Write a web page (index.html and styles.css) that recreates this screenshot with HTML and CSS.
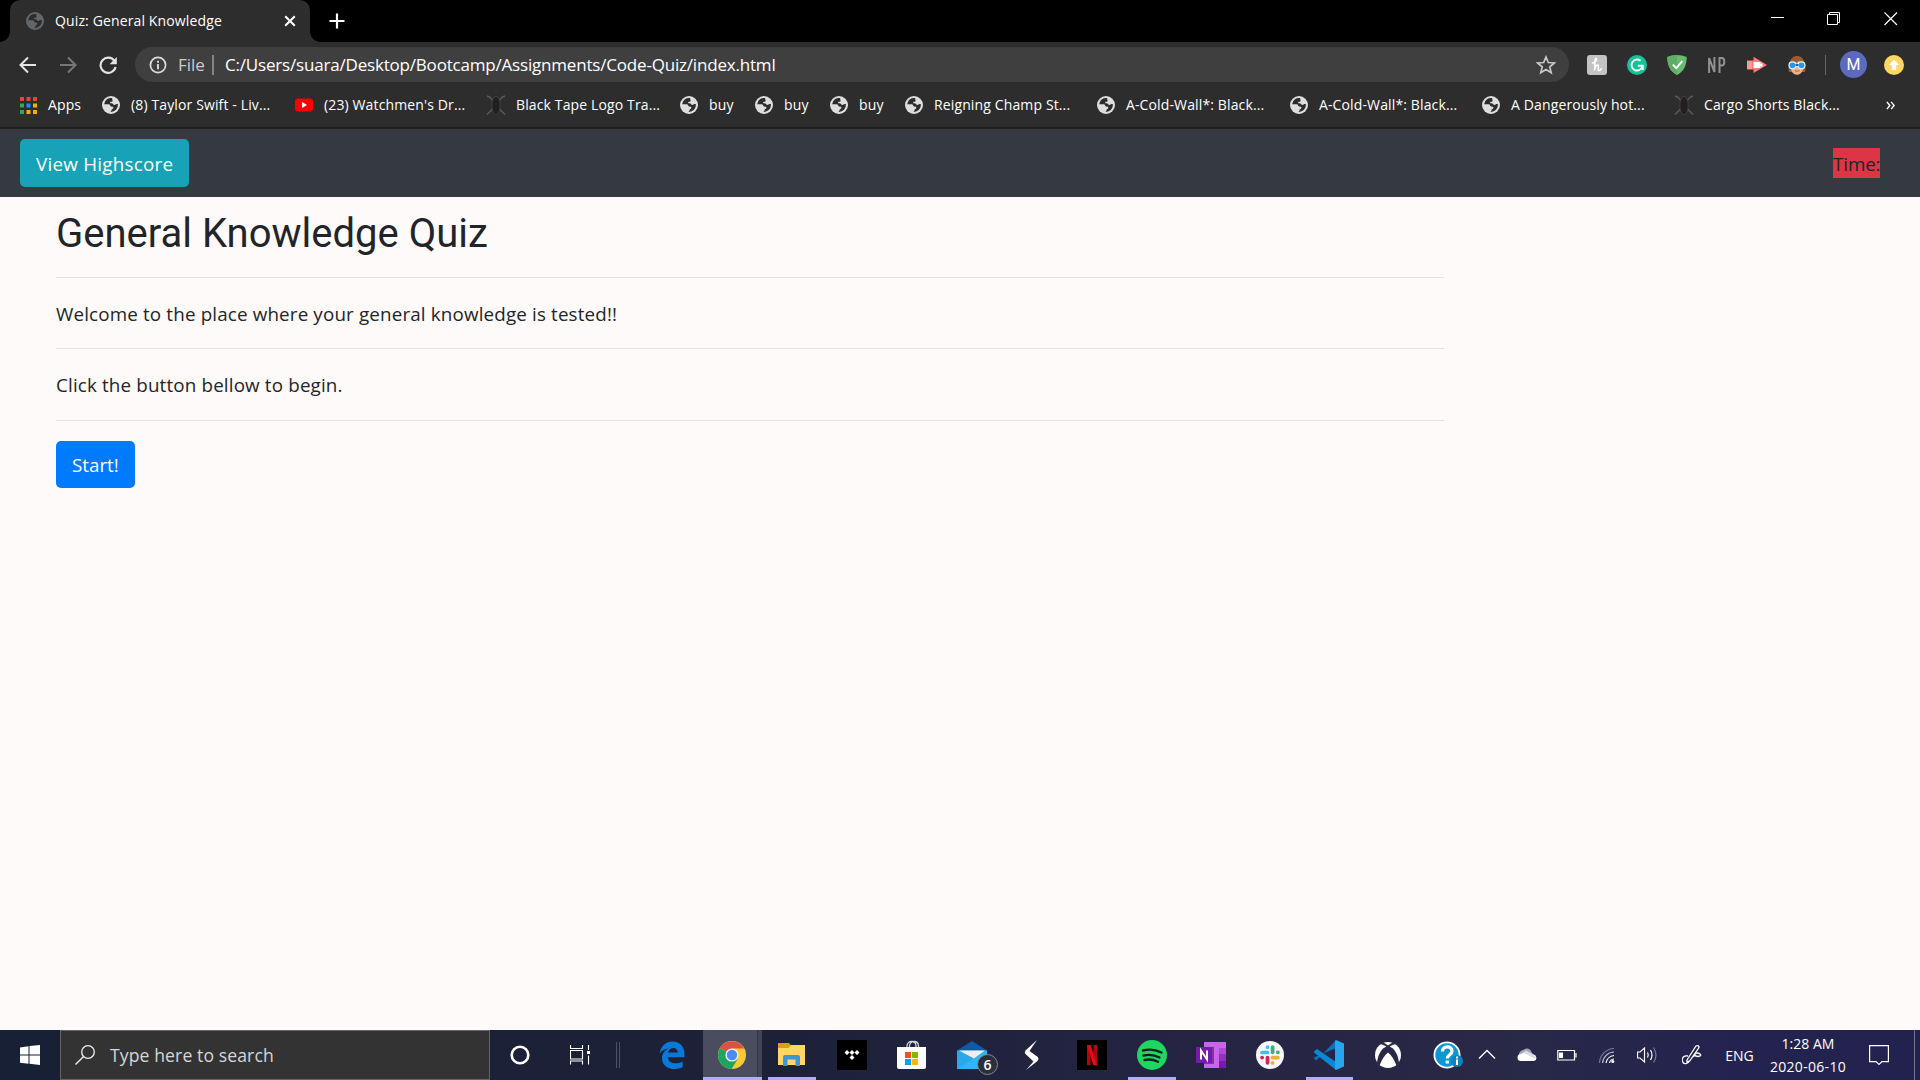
FILE: index.html
```html
<!DOCTYPE html>
<html lang="en">
<head>
<meta charset="utf-8">
<title>Quiz: General Knowledge</title>
<link rel="stylesheet" href="styles.css">
</head>
<body>
<svg class="defs" aria-hidden="true">
  <symbol id="globe" viewBox="0 0 18 18">
    <circle cx="9" cy="9" r="9" fill="currentColor"/>
    <path class="hole" d="M10.3 2.1A7 7 0 0 0 2.1 8.2H6.7c1.7 0 1.1 2 2.4 2.3 1.4.2 2.4.2 2.3 1.4-.1 1.100-1.700.8-1.800 2-.1.800-.4 1.500-1.200 2A7 7 0 0 0 15.900 8.100h-1.500c-.8 0-.9.9-2 .9-1.400 0-1-1.200-2.200-1.500-1-.2-2.200.1-2.200-.9 0-1.300 2.300-.4 2.600-1.700.2-1.100-.9-1.600-.3-2.800z"/>
  </symbol>
  <symbol id="beetle" viewBox="0 0 20 20">
    <path d="M1 1l2.500 1 4 4M19 1l-2.500 1-4 4M1 19.500l6-6M19 19.500l-6-6" fill="none" stroke="#5a5a5a" stroke-width="1.500"/>
    <ellipse cx="10" cy="10.500" rx="4.200" ry="9.200" fill="#231f20" stroke="#494949" stroke-width=".7"/>
  </symbol>
</svg>

<header class="browser">
  <div class="tabs">
    <div class="tab">
      <svg class="globe globe-tab"><use href="#globe"/></svg>
      <span class="tab-title t">Quiz: General Knowledge</span>
      <svg class="tab-close" viewBox="0 0 12 12"><path d="M1.200 1.200l9.600 9.600M10.800 1.200l-9.600 9.600" stroke="#fff" stroke-width="2"/></svg>
    </div>
    <svg class="tab-new" viewBox="0 0 16 16"><path d="M8 .5v15M.5 8h15" stroke="#fff" stroke-width="2.200"/></svg>
    <div class="window-buttons">
      <svg viewBox="0 0 14 14"><path d="M1 5.500h13" stroke="#fff"/></svg>
      <svg viewBox="0 0 14 14"><path d="M.5 2.500h10v10h-10zM2.500 2.500v-2h10v10h-2" fill="none" stroke="#fff"/></svg>
      <svg viewBox="0 0 14 14"><path d="M.5.5l12.500 12.500M13 .5L.5 13" stroke="#fff" stroke-width="1.200"/></svg>
    </div>
  </div>

  <div class="toolbar">
    <svg class="nav-icon" viewBox="0 0 18 18"><path d="M17 9H2M9 1.500L1.500 9 9 16.500" fill="none" stroke="#e4e4e4" stroke-width="2"/></svg>
    <svg class="nav-icon" viewBox="0 0 18 18"><path d="M1 9h15M9 1.500L16.500 9 9 16.500" fill="none" stroke="#777" stroke-width="2"/></svg>
    <svg class="nav-icon" viewBox="0 0 18 18"><path d="M15.500 5A7.600 7.600 0 1 0 16.600 11" fill="none" stroke="#e4e4e4" stroke-width="2.100"/><path d="M17.800 1v7.200h-7.200z" fill="#e4e4e4"/></svg>
    <div class="address">
      <svg class="info" viewBox="0 0 18 18"><circle cx="9" cy="9" r="7.600" fill="none" stroke="#dcdcdc" stroke-width="1.700"/><path d="M9 8v5.200M9 4.800v2" stroke="#dcdcdc" stroke-width="1.900"/></svg>
      <span class="scheme t">File</span>
      <span class="divider"></span>
      <span class="url t">C:/Users/suara/Desktop/Bootcamp/Assignments/Code-Quiz/index.html</span>
      <svg class="star" viewBox="0 0 18 18"><path d="M9 1.800l2.100 5 5.400.4-4.100 3.500 1.300 5.300L9 13.100l-4.700 2.900 1.300-5.300L1.500 7.200l5.400-.4z" fill="none" stroke="#c9c9c9" stroke-width="1.500"/></svg>
    </div>
    <div class="extensions">
      <svg viewBox="0 0 20 20"><rect width="20" height="20" rx="3" fill="#c3c3c3"/><path d="M5.500 8c3.500 0 5-4.800 3.400-4.800S8.200 8 7.500 15.500c.6-4 2-5.500 3.300-5.400 1.800.2-.8 5.400 1.200 5.400 1 0 1.900-1 2.300-2" fill="none" stroke="#fff" stroke-width="1.600" stroke-linecap="round"/></svg>
      <svg viewBox="0 0 20 20"><circle cx="10" cy="10" r="10" fill="#15c39a"/><path d="M13.500 5.800A5.500 5.500 0 1 0 15.300 11.500" fill="none" stroke="#fff" stroke-width="1.900"/><path d="M10.800 10.800h5v4.200" fill="none" stroke="#fff" stroke-width="1.900"/></svg>
      <svg viewBox="0 0 20 20"><path d="M10 0c3.500 0 6.500.8 9.700 2C19.700 10 17 16.500 10 20 3 16.500.3 10 .3 2 3.500.8 6.500 0 10 0z" fill="#68bc71"/><path d="M10 0v20C3 16.500.3 10 .3 2 3.500.8 6.500 0 10 0z" fill="#5fae68"/><path d="M5.800 9.500l3.500 3.700 6-7" fill="none" stroke="#fff" stroke-width="1.900"/></svg>
      <svg viewBox="0 0 20 20"><path d="M2.100 18V3l5.300 14V2M12.500 18V3h2.300c3.400 0 3.400 7.500 0 7.500h-2.300" fill="none" stroke="#929292" stroke-width="2"/></svg>
      <svg viewBox="0 0 20 20"><path d="M0 5.500h6.500V1.800L20 10 6.500 18v-3.500H0z" fill="#f77"/><path d="M6.500 7h7v2l2-1v4l-2-1v2h-7z" fill="#fff"/><path d="M0 6h5v8H0z" fill="#f99"/></svg>
      <svg viewBox="0 0 20 20"><path d="M2 17C1 12 2 1 10 1s9 11 8 16z" fill="#9b5c32"/><path d="M4 9c3 0 6-1 8-3 1 2 2 3 4 3v4c0 9-12 9-12 0z" fill="#f0ad86"/><path d="M8 15.500c1.500 1 3 1 4.500 0" stroke="#b55b50" fill="none"/><g fill="#2796ed" stroke="#e9f6ff" stroke-width="1.200"><circle cx="5.500" cy="10.300" r="3.500"/><circle cx="14.500" cy="10.300" r="3.500"/></g><path d="M8.500 10h3" stroke="#1668bd" stroke-width="2"/></svg>
    </div>
    <span class="toolbar-divider"></span>
    <span class="avatar">M</span>
    <svg class="update" viewBox="0 0 20 20"><circle cx="10" cy="10" r="10" fill="#fdd663"/><path d="M10 4.500l5 5.500h-2.800v5H7.800v-5H5z" fill="#fff"/></svg>
  </div>

  <nav class="bookmarks">
    <a class="bookmark apps"><svg class="apps-icon" viewBox="0 0 17 17"><path d="M0 0h4v4H0zM6.500 0h4v4h-4zM13 0h4v4h-4z" fill="#ea4335"/><path d="M0 6.500h4v4H0zM0 13h4v4H0z" fill="#34a853"/><path d="M6.500 6.500h4v4h-4z" fill="#1a8cff"/><path d="M13 6.500h4v4h-4zM6.500 13h4v4h-4zM13 13h4v4h-4z" fill="#fbab05"/></svg><span class="t">Apps</span></a>
    <a class="bookmark"><svg class="globe"><use href="#globe"/></svg><span class="t">(8) Taylor Swift - Liv...</span></a>
    <a class="bookmark"><svg class="globe" viewBox="0 0 18 18"><rect y="2.500" width="18" height="13" rx="3" fill="red"/><path d="M7 6l5 3-5 3z" fill="#fff"/></svg><span class="t">(23) Watchmen's Dr...</span></a>
    <a class="bookmark wide-icon"><svg class="beetle"><use href="#beetle"/></svg><span class="t">Black Tape Logo Tra...</span></a>
    <a class="bookmark"><svg class="globe"><use href="#globe"/></svg><span class="t">buy</span></a>
    <a class="bookmark"><svg class="globe"><use href="#globe"/></svg><span class="t">buy</span></a>
    <a class="bookmark"><svg class="globe"><use href="#globe"/></svg><span class="t">buy</span></a>
    <a class="bookmark"><svg class="globe"><use href="#globe"/></svg><span class="t">Reigning Champ St...</span></a>
    <a class="bookmark"><svg class="globe"><use href="#globe"/></svg><span class="t">A-Cold-Wall*: Black...</span></a>
    <a class="bookmark"><svg class="globe"><use href="#globe"/></svg><span class="t">A-Cold-Wall*: Black...</span></a>
    <a class="bookmark"><svg class="globe"><use href="#globe"/></svg><span class="t">A Dangerously hot...</span></a>
    <a class="bookmark wide-icon"><svg class="beetle"><use href="#beetle"/></svg><span class="t">Cargo Shorts Black...</span></a>
    <svg class="more" viewBox="0 0 8 8"><path d="M.8.800L3.400 4 .8 7.200M4.600.800L7.200 4 4.600 7.200" fill="none" stroke="#fff" stroke-width="1.300"/></svg>
  </nav>
</header>

<div class="navbar">
  <button class="btn btn-info"><span class="t">View Highscore</span></button>
  <span class="timer t">Time:</span>
</div>

<main class="content">
  <h1>General Knowledge Quiz</h1>
  <hr>
  <p>Welcome to the place where your general knowledge is tested!!</p>
  <hr>
  <p>Click the button bellow to begin.</p>
  <hr>
  <button class="btn btn-primary"><span class="t">Start!</span></button>
</main>

<footer class="taskbar">
  <div class="start"><svg viewBox="0 0 20 20"><path d="M0 2.500l8.500-1.200V9.500H0zM9.500 1.100L20 0v9.500H9.500zM0 10.500h8.500v8.200L0 17.700zM9.500 10.500H20V20L9.500 18.800z" fill="#fff"/></svg></div>
  <div class="search">
    <svg viewBox="0 0 20 20"><circle cx="13" cy="7" r="6.300" fill="none" stroke="#eee" stroke-width="1.300"/><path d="M8.600 11.500L.5 19.500" stroke="#eee" stroke-width="1.400"/></svg>
    <span class="t">Type here to search</span>
  </div>
  <div class="shell">
    <svg viewBox="0 0 20 20"><circle cx="10" cy="10" r="8.300" fill="none" stroke="#fff" stroke-width="2.600"/></svg>
    <svg viewBox="0 0 20 20"><path d="M.5 0v3.500h12V0M.5 5.500h12v8.500H.5zM.5 19.500V16h12v3.500M18.500 0v5M18.500 10.500v9" fill="none" stroke="#fff" stroke-width="1.100"/><path d="M17 6h3v3h-3z" fill="#fff"/></svg>
    <span class="grip"></span>
  </div>
  <div class="apps-row">
    <div class="app"><svg viewBox="0 0 30 30"><path d="M2.500 13.500C4 6 9 1.600 15.400 1.600 23 1.600 27.500 7 27.500 14v3.200H11c.2 7 9 7.500 14.700 4.200v5.500C17 31.500 5 28.500 5 18.200c0-4.500 2.500-8 6.500-9.800C8 8.600 4.500 10.500 2.500 13.500zM11 12.600h9.700c0-6.500-8.500-6-9.700 0z" fill="#0a78d7"/></svg></div>
    <div class="app active"><svg viewBox="0 0 30 30"><circle cx="15" cy="15" r="14" fill="#fcc934"/><path d="M15 15L2.900 8A14 14 0 0 0 14.600 29L21 18.500z" fill="#1da462"/><path d="M15 15L2.900 8A14 14 0 0 1 27.200 8.500H15z" fill="#dd5144"/><circle cx="15" cy="15" r="6.600" fill="#f4f4f4"/><circle cx="15" cy="15" r="5.200" fill="#4c8bf5"/></svg></div>
    <div class="app open"><svg viewBox="0 0 30 30"><path d="M1 3h11l2 2.500h12V8H1z" fill="#dd9d08"/><path d="M1 8h10.500L14 5h14v20H1z" fill="#ffd767"/><path d="M6 26V17q0-2 2-2h13q2 0 2 2v9h-4.500v-6.500h-8V26z" fill="#3c96d7"/></svg></div>
    <div class="app"><svg viewBox="0 0 30 30"><path d="M0 0h30v30H0z"/><path d="M10 10l2.500 2.500L10 15l-2.500-2.500zM15 10l2.500 2.500L15 15l-2.500-2.500zM20 10l2.500 2.500L20 15l-2.500-2.500zM15 15l2.500 2.500L15 20l-2.500-2.500z" fill="#fff"/></svg></div>
    <div class="app"><svg viewBox="0 0 30 30"><path d="M10 8V6c0-6 9-6 9 0v2M12.500 8V6c0-6 9-6 9 0v2" fill="none" stroke="#d4d6df" stroke-width="1.300"/><path d="M0 7h29v20q0 2-2 2H2q-2 0-2-2z" fill="#fff"/><path d="M8 12h6v6H8z" fill="#f25022"/><path d="M15 12h6v6h-6z" fill="#7fba00"/><path d="M8 19h6v6H8z" fill="#00a4ef"/><path d="M15 19h6v6h-6z" fill="#ffb900"/></svg></div>
    <div class="app"><svg viewBox="0 0 30 30"><path d="M0 10.500L15 1l15 9.500v5H0z" fill="#0a5ca8"/><path d="M0 10.500h30V29H0z" fill="#29a8ea"/><path d="M2 10.500h26L17 18.500z" fill="#eee"/><path d="M30 10.500V29H0z" fill="#38c5f5" opacity=".5"/></svg><span class="badge">6</span></div>
    <div class="app"><svg viewBox="0 0 30 30"><path d="M20 0L8.500 10.500q-1.500 2 0 3.500l8 7.500L9 30l11.500-9q2-2 .3-4L12.500 11z" fill="#fff"/></svg></div>
    <div class="app"><svg viewBox="0 0 30 30"><path d="M0 0h30v30H0z"/><path d="M10 5h3.500v20l-3.500.4zM16.500 5H20v20.400l-3.500-.4z" fill="#b1060f"/><path d="M10 5h3.700L20 25.400l-3.800-.4z" fill="#e50914"/></svg></div>
    <div class="app open"><svg viewBox="0 0 30 30"><circle cx="15" cy="15" r="15" fill="#1ed760"/><path d="M6 10.500q9.500-2.500 18.500 2M6.500 15.500q8.500-2 16 2M7.500 20q7-1.500 13.500 1.800" fill="none" stroke="#10201a" stroke-width="2.400" stroke-linecap="round"/></svg></div>
    <div class="app"><svg viewBox="0 0 30 30"><path d="M8 2h22v26H8z" fill="#ca64ea"/><path d="M23 8h7v6h-7z" fill="#ae4bd5"/><path d="M23 14h7v7h-7z" fill="#9332bf"/><path d="M23 21h7v7h-7z" fill="#7719aa"/><path d="M8 7h10v17H8z" fill="#52156f" opacity=".6"/><path d="M0 7h16v16H0z" fill="#7719aa"/><path d="M5 19.500v-9l6 9v-9" fill="none" stroke="#fff" stroke-width="2"/></svg></div>
    <div class="app"><svg viewBox="0 0 30 30"><circle cx="15" cy="15" r="14" fill="#f7f7f7"/><g fill="none" stroke-width="3.700" stroke-linecap="round"><path d="M12.500 7v.2M12.500 12.500H7" stroke="#36c5f0"/><path d="M17.600 7v5.300M22.800 12.300h.2" stroke="#2eb67d"/><path d="M17.600 22.800v.2M17.600 17.600h5.300" stroke="#ecb22e"/><path d="M12.500 17.600v5.200M7 17.600h.2" stroke="#e01e5a"/></g></svg></div>
    <div class="app open"><svg viewBox="0 0 30 30"><path d="M22 0L5.500 17.500 2 20.500 0 18.500v-1L22 8z" fill="#0873b8"/><path d="M0 11.500l3-2.500L22 22v8L0 12.500z" fill="#0b88d5"/><path d="M22 0l8 3.500v23L22 30l-1-1V1z" fill="#27a5f2"/></svg></div>
    <div class="app"><svg viewBox="0 0 30 30"><circle cx="15" cy="15" r="13" fill="#fff"/><path d="M8 2Q12 2.500 15 5.500 18 2.500 22 2L25 4Q20 3.500 15 8 10 3.500 5 4z" fill="#292947"/><path d="M10 8.500Q5 13.500 4 23L6.500 25.500Q10 16.500 15 12.500 20 16.500 23.500 25.500L26 23Q25 13.500 20 8.500L15 5.500z" fill="#292947"/></svg></div>
    <div class="app last"><svg viewBox="0 0 30 30"><circle cx="14" cy="15" r="13.500" fill="#fff"/><circle cx="14" cy="15" r="11.700" fill="#0c96d2"/><path d="M9.500 11.500c0-6 9.500-6 9.500-.5 0 4-4.700 3.500-4.700 7.500M14.300 20.500v3" fill="none" stroke="#fff" stroke-width="3.300"/><circle cx="24" cy="21" r="6" fill="#0a82c5"/><path d="M24 16.500v2M24 19.500v5.500" stroke="#fff" stroke-width="2"/></svg></div>
  </div>
  <div class="tray">
    <svg viewBox="0 0 20 20"><path d="M2 13.500L10 5.500l8 8" fill="none" stroke="#fff" stroke-width="1.300"/></svg>
    <svg viewBox="0 0 20 20"><path d="M2 11a5 5 0 0 1 4-6q6-4 9 3l3 3-8 3z" fill="#a5a5b5"/><path d="M4 16a3.500 3.500 0 0 1 0-7q3-2 5 0 4-3 6.500 1a3 3 0 0 1 1.500 6z" fill="#fff"/><path d="M4 9q3-2 5 0L18 14q2-4-3-5L9 5.500z" fill="#dcdce3"/></svg>
    <svg viewBox="0 0 20 20"><path d="M.8 5.500h16.700v9.500H.8zM19 8v4.500" fill="none" stroke="#fff" stroke-width="1.200"/><path d="M2 7.500h4v5.500H2z" fill="#fff"/></svg>
    <svg viewBox="0 0 20 20"><g fill="none" stroke-width="1.200"><path d="M2.500 18A15 15 0 0 1 17 3.500" stroke="#77779b"/><path d="M5.500 18A12 12 0 0 1 17 7" stroke="#bbbbd0"/><path d="M9 18a9 9 0 0 1 8-7.500M12.500 18a5 5 0 0 1 4.500-4" stroke="#fff"/></g><circle cx="15.800" cy="16.500" r="1.500" fill="#fff"/></svg>
    <svg viewBox="0 0 20 20"><path d="M.5 7h2.500L7.500 3v14l-4.500-4H.5z" fill="none" stroke="#fff" stroke-width="1.200"/><path d="M10.500 7.500q1.500 2.500 0 5M13.500 5q3 5 0 10" fill="none" stroke="#fff" stroke-width="1.200"/><path d="M16.500 2.500q5 7.500 0 15" fill="none" stroke="#77779b" stroke-width="1.200"/></svg>
    <svg viewBox="0 0 20 20"><path d="M5 15L14 1q3-1 3 1.500L8 15.500l-3 1.800zM6 11C2 10-.5 13 .5 16.500 1.500 20 6 19 8 15.500M11 12q3-6 7-3 2 2-2 2.500l-4-1" fill="none" stroke="#fff" stroke-width="1.300"/></svg>
    <span class="lang t">ENG</span>
    <div class="clock"><span class="t">1:28 AM</span><span class="date t">2020-06-10</span></div>
    <svg viewBox="0 0 20 20"><path d="M.6.600h18.800v16H13l-3 2.800-3-2.800H.6z" fill="none" stroke="#fff" stroke-width="1.200"/></svg>
    <span class="peek"></span>
  </div>
</footer>
</body>
</html>
```
FILE: styles.css
```css
* { box-sizing: border-box; }
html, body { height: 100%; }
body {
  margin: 0;
  display: flex;
  flex-direction: column;
  overflow: hidden;
  background: #fffafa;
  color: #212529;
  font-family: "Open Sans", "Noto Sans", sans-serif;
}
svg { display: block; flex: none; }
.defs { position: absolute; width: 0; height: 0; }
.t { white-space: nowrap; }

/* Browser window */
.browser { height: 129px; background: #2d2d2d; border-bottom: 2px solid #20201f; color: #fff; font-size: 14px; letter-spacing: .13px; }
.tabs { display: flex; height: 42px; padding-left: 10px; background: #000; }
.tab { position: relative; display: flex; align-items: center; width: 300px; padding: 0 14px 0 16px; background: #2d2d2d; border-radius: 10px 10px 0 0; }
.tab::before, .tab::after { content: ""; position: absolute; bottom: 0; width: 10px; height: 10px; }
.tab::before { left: -10px; background: radial-gradient(circle at 0 0, #000 9.5px, #2d2d2d 10px); }
.tab::after { right: -10px; background: radial-gradient(circle at 100% 0, #000 9.5px, #2d2d2d 10px); }
.globe { width: 18px; height: 18px; color: #dedede; }
.hole { fill: #2d2d2d; }
.globe-tab { color: #62666a; }
.tab-title { margin-left: 11px; padding-bottom: 2px; }
.tab-close { width: 12px; height: 12px; margin-left: auto; }
.tab-new { width: 16px; height: 16px; margin: 13px 0 0 19px; }
.window-buttons { display: flex; gap: 43px; margin: 12px 22px 0 auto; }
.window-buttons svg { width: 14px; height: 14px; }

.toolbar { display: flex; align-items: center; height: 45px; padding: 0 16px 0 19px; }
.nav-icon { width: 18px; height: 18px; margin-right: 22px; }
.address { display: flex; align-items: center; width: 1434px; height: 35px; margin-left: -4px; padding: 0 13px 0 14px; border-radius: 18px; background: #3f3f3f; font-size: 17px; letter-spacing: -.19px; }
.info { width: 18px; height: 18px; }
.scheme { margin-left: 11px; width: 27px; padding-bottom: 1px; color: #ccc; letter-spacing: 0; }
.url { padding-bottom: 1px; }
.divider { width: 2px; height: 20px; margin: 0 11px 0 7px; background: #858585; }
.star { width: 20px; height: 20px; margin-left: auto; }
.extensions { display: flex; gap: 20px; margin-left: 18px; }
.extensions svg { width: 20px; height: 20px; }
.toolbar-divider { width: 1px; height: 20px; margin-left: 18px; background: #666; }
.avatar { display: flex; align-items: center; justify-content: center; width: 27px; height: 27px; margin-left: 14px; border-radius: 50%; background: #5c6bc0; font: 16px Roboto, sans-serif; }
.update { width: 20px; height: 20px; margin-left: 17px; }

.bookmarks { display: grid; grid-template-columns: 82px 193px 191px 194px 75px 75px 75px 192px 193px 192px 192px 212px 9px; align-items: center; height: 36px; padding-left: 20px; }
.bookmark { display: flex; align-items: center; gap: 11px; }
.bookmark .t { padding-bottom: 2px; }
.wide-icon { gap: 10px; }
.apps-icon { width: 17px; height: 17px; }
.beetle { width: 20px; height: 20px; }
.more { width: 9px; height: 9px; }

/* Quiz page */
.navbar { display: flex; align-items: center; justify-content: space-between; flex: none; height: 68px; padding: 0 40px 0 20px; background: #343a40; }
.btn { height: 48px; padding: 2px 16px 0; border: 0; border-radius: 5px; color: #fff; font: 18.800px "Open Sans", "Noto Sans", sans-serif; text-align: left; }
.btn-info { width: 169px; background: #17a2b8; letter-spacing: .25px; }
.btn-primary { display: block; width: 79px; height: 47px; background: #007bff; }
.timer { width: 47px; height: 30px; background: #dc3545; font-size: 18.800px; line-height: 33px; letter-spacing: -.1px; }
.content { flex: 1; width: 1444px; padding: 12px 0 0 56px; font-size: 18.800px; letter-spacing: .16px; }
h1 { margin: 0; padding-top: 1px; height: 48px; font: 400 40px/48px Roboto, sans-serif; letter-spacing: 0; }
hr { height: 1px; margin: 20px 0; border: 0; background: #e5e1e1; }
p { margin: 0; height: 30.400px; line-height: 32px; }

/* Windows taskbar */
.taskbar { display: flex; flex: none; height: 50px; background: linear-gradient(90deg, #182035 0, #1c2138 40%, #242442 60%, #292947 78%, #24234f 90%, #22224f); color: #fff; }
.start { display: grid; place-items: center; width: 60px; }
.start svg { width: 20px; height: 20px; }
.search { display: flex; align-items: center; gap: 15px; width: 430px; padding-left: 14px; background: #333; border: 1px solid #656565; color: #d6d6d6; font-size: 17.600px; letter-spacing: .1px; }
.search svg { width: 20px; height: 20px; }
.shell { display: grid; grid-template-columns: 60px 60px 32px; place-items: center; }
.shell svg { width: 20px; height: 20px; }
.grip { width: 4px; height: 26px; border: solid #4d5063; border-width: 0 1px; justify-self: start; margin-left: 6px; }
.apps-row { display: grid; grid-template-columns: repeat(9, 60px) 58.800px repeat(3, 59px) 49.200px; }
.app { position: relative; display: grid; place-items: center; }
.app svg { width: 30px; height: 30px; }
.app.last { padding-left: 11px; }
.active { width: 59px; margin-left: 1px; background: linear-gradient(90deg, #4a4d60 54px, #34374a 54px, #34374a 55px, #414457 55px); border-bottom: 3px solid #b3abfe; padding: 3px 2px 0 0; }
.open::after { content: ""; position: absolute; left: 6px; right: 6px; bottom: 0; height: 3px; background: #b3abfe; }
.badge { position: absolute; left: 35px; top: 24px; display: grid; place-items: center; width: 21px; height: 21px; border: 1px solid #878890; border-radius: 50%; background: #2b2f3a; font-size: 14px; font-weight: 600; }
.tray { display: grid; grid-template-columns: repeat(5, 40px) 50px 45px 92px 50px 10px 6px; place-items: center; font-size: 14px; }
.tray svg { width: 20px; height: 20px; }
.clock { display: flex; flex-direction: column; align-items: center; line-height: 23px; }
.date { letter-spacing: .3px; }
.peek { grid-column: 11; width: 6px; height: 50px; border-left: 1px solid #74748f; }
```
